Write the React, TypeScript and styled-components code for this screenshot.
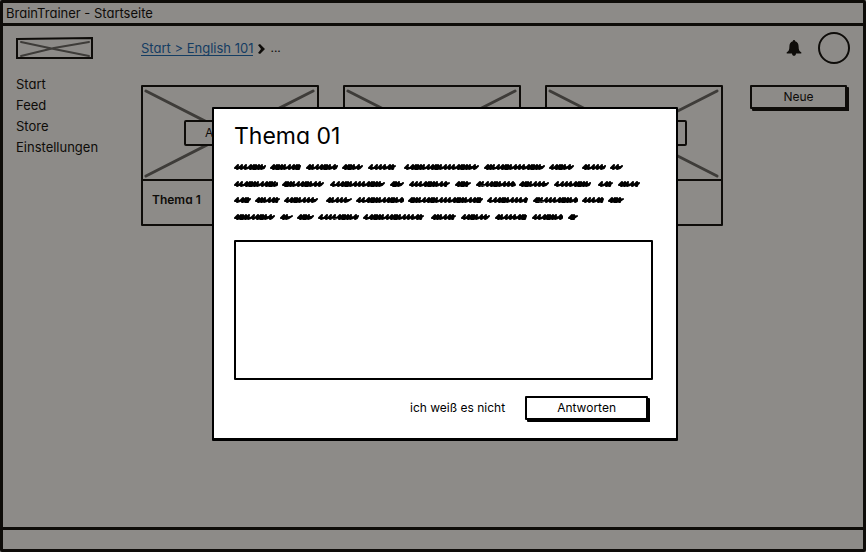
import React from "react";
import styled, { createGlobalStyle } from "styled-components";

const ink = "#000";

const GlobalStyle = createGlobalStyle`
  *, *::before, *::after { box-sizing: border-box; }
  body {
    margin: 0;
    background: #fff;
    color: ${ink};
    font-family: Inter, Lato, sans-serif;
    font-feature-settings: "cv11";
    font-size: 12px;
    line-height: 16px;
  }
  button, textarea { font: inherit; font-feature-settings: inherit; color: inherit; }
`;

const Frame = styled.div`
  display: flex;
  flex-direction: column;
  min-height: 100vh;
  border: 3px solid ${ink};
  border-radius: 2px;
`;

const TitleBar = styled.header`
  padding: 2px 3px;
  font-size: 13px;
  border-bottom: 3px solid ${ink};
`;

const StatusBar = styled.footer`
  height: 22px;
  border-top: 3px solid ${ink};
`;

const Body = styled.div`
  flex: 1;
  display: grid;
  grid-template-columns: 125px 1fr;
  padding: 6px 13px;
`;

const Sidebar = styled.nav`
  display: flex;
  flex-direction: column;
  align-items: flex-start;
`;

const Logo = styled.svg`
  width: 78px;
  height: 23px;
  margin: 5px 0 14px;
`;

const NavLink = styled.a`
  color: inherit;
  font-size: 13px;
  line-height: 21px;
  text-decoration: none;
`;

const Main = styled.main`
  display: flex;
  flex-direction: column;
  gap: 21px;
`;

const TopRow = styled.div`
  display: flex;
  align-items: center;
  justify-content: space-between;
  height: 32px;
`;

const Crumbs = styled.nav`
  display: flex;
  align-items: center;
  gap: 5px;
`;

const CrumbLink = styled.a`
  color: #0c63b4;
  font-size: 13px;
  line-height: 14px;
  text-decoration: none;
  border-bottom: 1px solid #0c63b4;
`;

const Tools = styled.div`
  display: flex;
  align-items: center;
  gap: 16px;
`;

const IconButton = styled.button`
  display: grid;
  padding: 0;
  border: 0;
  background: none;
`;

const Avatar = styled.button`
  width: 32px;
  height: 32px;
  padding: 0;
  border: 2px solid ${ink};
  border-radius: 50%;
  background: none;
`;

const Content = styled.div`
  display: grid;
  grid-template-columns: 1fr 97px;
  align-items: start;
  gap: 27px;
  padding-right: 3px;
`;

const Cards = styled.div`
  display: grid;
  grid-template-columns: repeat(3, 1fr);
  gap: 24px;
`;

const Card = styled.article`
  border: 2px solid ${ink};
  border-radius: 1px;
`;

const Picture = styled.div`
  position: relative;
  display: grid;
  place-items: center;
  height: 94px;
  border-bottom: 2px solid ${ink};
`;

const Cross = styled.svg`
  position: absolute;
  inset: 0;
  width: 100%;
  height: 100%;
`;

const Badge = styled.button<{ $wide?: boolean }>`
  position: relative;
  width: ${(p) => (p.$wide ? 106 : 92)}px;
  height: 26px;
  padding: 0;
  border: 2px solid ${ink};
  border-radius: 2px;
  background: #fff;
`;

const CardTitle = styled.h2`
  margin: 0;
  padding: 11px 9px 16px;
  font-size: 12px;
  font-weight: 600;
  line-height: 16px;
`;

const ShadowButton = styled.button`
  height: 24px;
  padding: 0 30px;
  border: 2px solid ${ink};
  border-radius: 1px;
  background: #fff;
  box-shadow: 3px 3px 0 -1px ${ink}, 2px 2px 0 ${ink};
`;

const Overlay = styled.div`
  position: fixed;
  inset: 0;
  display: grid;
  align-items: start;
  padding: 107px 188px 0 212px;
  background: rgba(28, 23, 18, 0.5);
`;

const Dialog = styled.section`
  display: flex;
  flex-direction: column;
  padding: 14px 23px 18px 20px;
  border: 2px solid ${ink};
  border-bottom-width: 3px;
  border-radius: 1px;
  background: #fff;
`;

const DialogTitle = styled.h1`
  margin: 0 0 14px;
  font-size: 23px;
  font-weight: 400;
  line-height: 26px;
`;

const Scribble = styled.svg`
  display: block;
  width: 408px;
  height: 60px;
  margin-bottom: 17px;
`;

const Answer = styled.textarea`
  display: block;
  width: 100%;
  height: 140px;
  padding: 8px;
  border: 2px solid ${ink};
  border-radius: 1px;
  background: #fff;
  resize: none;
`;

const Actions = styled.div`
  display: flex;
  align-items: center;
  justify-content: flex-end;
  gap: 20px;
  margin-top: 16px;
  padding-right: 5px;
`;

const TextButton = styled.button`
  padding: 0;
  border: 0;
  background: none;
`;

const scribbleLines: number[][][] = [
  [[0, 32], [36, 67], [72, 104], [108, 129], [134, 162], [170, 245], [250, 311], [315, 340], [348, 372], [376, 389]],
  [[0, 44], [48, 90], [96, 151], [156, 170], [175, 216], [221, 237], [242, 281], [285, 315], [320, 357], [364, 379], [384, 406]],
  [[0, 17], [21, 46], [50, 84], [92, 118], [122, 170], [174, 249], [253, 294], [299, 344], [348, 370], [374, 390]],
  [[0, 41], [46, 59], [63, 80], [84, 125], [129, 190], [197, 222], [227, 256], [261, 293], [298, 329], [334, 344]],
];

const steps = [4, 4, 5, 3, 2, 3, 3, 5, 4, 3, 2, 3, 5];

function scribbleWord(start: number, end: number, y: number, seed: number) {
  let x = start + 1;
  let i = seed;
  let d = `M${x} ${y + 1}`;
  while (x < end - 4) {
    const step = steps[i % steps.length];
    d += ` L${x + 3} ${y - 2} L${x + 2} ${y + 2}`;
    if (step < 4) d += ` L${x + 4} ${y - 1} L${x + 3} ${y + 2}`;
    x += step;
    i += 1;
    d += ` L${x} ${y + 1}`;
  }
  return `${d} L${end - 1} ${y - 1} M${start + 2} ${y + 1} L${end - 3} ${y}`;
}

const scribblePath = scribbleLines
  .map((words, row) =>
    words.map(([a, b], n) => scribbleWord(a, b, 4 + Math.round(row * 16.6), n * 3 + row)).join(" ")
  )
  .join(" ");

const cards = [
  { title: "Thema 1", wide: false },
  { title: "Thema 2", wide: false },
  { title: "Thema 3", wide: true },
];

export default function App() {
  return (
    <>
      <GlobalStyle />
      <Frame>
        <TitleBar>BrainTrainer - Startseite</TitleBar>
        <Body>
          <Sidebar aria-label="Hauptmenü">
            <Logo viewBox="0 0 78 23" fill="none" aria-hidden="true">
              <path d="M1 2 L76 1 L76 21 L1 21 Z" stroke={ink} strokeWidth="2" />
              <path d="M5 5 L38 12 L73 19 M5 19 L38 11 L73 5" stroke="#606060" strokeWidth="2" strokeLinecap="round" />
            </Logo>
            <NavLink href="#start">Start</NavLink>
            <NavLink href="#feed">Feed</NavLink>
            <NavLink href="#store">Store</NavLink>
            <NavLink href="#einstellungen">Einstellungen</NavLink>
          </Sidebar>
          <Main>
            <TopRow>
              <Crumbs aria-label="Pfad">
                <CrumbLink href="#english">Start &gt; English 101</CrumbLink>
                <svg width="7" height="11" viewBox="0 0 7 11" aria-hidden="true">
                  <path d="M0 2 L2 1 L7 6 L2 11 L0 10 L3 6 Z" fill={ink} />
                </svg>
                <span>...</span>
              </Crumbs>
              <Tools>
                <IconButton aria-label="Benachrichtigungen">
                  <svg width="16" height="16" viewBox="0 0 16 16" aria-hidden="true">
                    <path
                      d="M8 0 C8.8 0 9.2 .6 9.2 1.3 C11.7 2 12.6 4 12.6 6.4 C12.6 10 13.5 11.3 15.3 12.2 V13.5 H10 C10 15 9 15.8 8 15.8 C7 15.8 6 15 6 13.5 H.7 V12.2 C2.5 11.3 3.4 10 3.4 6.4 C3.4 4 4.3 2 6.8 1.3 C6.8 .6 7.2 0 8 0 Z"
                      fill={ink}
                    />
                  </svg>
                </IconButton>
                <Avatar aria-label="Profil" />
              </Tools>
            </TopRow>
            <Content>
              <Cards>
                {cards.map((card) => (
                  <Card key={card.title}>
                    <Picture>
                      <Cross viewBox="0 0 176 92" preserveAspectRatio="none" aria-hidden="true">
                        <path
                          d="M3 4 L172 89 M3 89 L172 4"
                          stroke="#606060"
                          strokeWidth="3"
                          strokeLinecap="round"
                          fill="none"
                        />
                      </Cross>
                      <Badge $wide={card.wide}>Ansehen</Badge>
                    </Picture>
                    <CardTitle>{card.title}</CardTitle>
                  </Card>
                ))}
              </Cards>
              <ShadowButton>Neue</ShadowButton>
            </Content>
          </Main>
        </Body>
        <StatusBar />
      </Frame>
      <Overlay>
        <Dialog role="dialog" aria-modal="true" aria-labelledby="dialog-title">
          <DialogTitle id="dialog-title">Thema 01</DialogTitle>
          <Scribble viewBox="0 0 408 60" aria-hidden="true">
            <path
              d={scribblePath}
              fill="none"
              stroke={ink}
              strokeWidth="2"
              strokeLinecap="round"
              strokeLinejoin="round"
            />
          </Scribble>
          <Answer aria-labelledby="dialog-title" />
          <Actions>
            <TextButton>ich weiß es nicht</TextButton>
            <ShadowButton>Antworten</ShadowButton>
          </Actions>
        </Dialog>
      </Overlay>
    </>
  );
}
